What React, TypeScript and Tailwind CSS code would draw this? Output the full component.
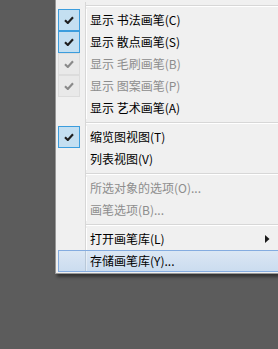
import React from "react";

type Item =
  | { kind: "sep" }
  | {
      kind: "item";
      label: string;
      checked?: boolean;
      disabled?: boolean;
      submenu?: boolean;
      active?: boolean;
    };

const items: Item[] = [
  { kind: "sep" },
  { kind: "item", label: "显示 书法画笔(C)", checked: true },
  { kind: "item", label: "显示 散点画笔(S)", checked: true },
  { kind: "item", label: "显示 毛刷画笔(B)", checked: true, disabled: true },
  { kind: "item", label: "显示 图案画笔(P)", checked: true, disabled: true },
  { kind: "item", label: "显示 艺术画笔(A)" },
  { kind: "sep" },
  { kind: "item", label: "缩览图视图(T)", checked: true },
  { kind: "item", label: "列表视图(V)" },
  { kind: "sep" },
  { kind: "item", label: "所选对象的选项(O)...", disabled: true },
  { kind: "item", label: "画笔选项(B)...", disabled: true },
  { kind: "sep" },
  { kind: "item", label: "打开画笔库(L)", submenu: true },
  { kind: "item", label: "存储画笔库(Y)...", active: true },
];

function Check({ disabled }: { disabled?: boolean }) {
  return (
    <div
      className={
        "flex h-[22px] w-[22px] items-center justify-center border " +
        (disabled ? "border-[#dcdcdc] bg-[#e9e9e9]" : "border-[#3c9ddd] bg-[#c4dff1]")
      }
    >
      <svg width="10" height="8" viewBox="0 0 10 8">
        <path
          d="M1 4.2 L3.8 7 L9 1.2"
          fill="none"
          stroke={disabled ? "#8a8a8a" : "#1e1e1e"}
          strokeWidth="2.1"
        />
      </svg>
    </div>
  );
}

function Row({ item }: { item: Extract<Item, { kind: "item" }> }) {
  const gutterLine = item.active ? "bg-[#b9c8d8]" : "bg-[#d7d7d7]";
  return (
    <div
      className={
        "flex h-[22px] items-center " +
        (item.active
          ? "ml-[2px] border border-r-0 border-[#84ace0] bg-gradient-to-b from-[#dbe7f4] to-[#cbdcef]"
          : "ml-[2px]")
      }
    >
      <div className={"flex w-[27px] items-center " + (item.active ? "-ml-px" : "")}>
        {item.checked ? <Check disabled={item.disabled} /> : <div className="w-[22px]" />}
      </div>
      <div className={"h-full w-px " + gutterLine} />
      <div className={"h-full w-px " + (item.active ? "bg-white/40" : "bg-white")} />
      <span
        className={
          "flex-1 pl-[3px] text-[12px] leading-none whitespace-nowrap " +
          (item.disabled ? "text-[#8d8d8d]" : "text-black")
        }
      >
        {item.label}
      </span>
      {item.submenu && (
        <svg width="5" height="8" viewBox="0 0 5 8" className="mr-[8px]">
          <path d="M0 0 L4.5 4 L0 8 Z" fill="#1a1a1a" />
        </svg>
      )}
    </div>
  );
}

function Separator() {
  return (
    <div className="ml-[2px] flex h-[7px]">
      <div className="w-[27px]" />
      <div className="h-full w-px bg-[#d7d7d7]" />
      <div className="flex flex-1 flex-col pt-[3px]">
        <div className="h-px bg-[#d7d7d7]" />
        <div className="h-px bg-white" />
      </div>
    </div>
  );
}

export default function App() {
  return (
    <div
      className="flex h-[349px] w-[278px] items-start overflow-hidden bg-[#5c5c5c]"
      style={{ fontFamily: "'Noto Sans CJK SC', 'Noto Sans', sans-serif" }}
    >
      <div className="ml-[55px] flex-1 border-b border-l border-[#979797] bg-[#f0f0f0] pt-[2px] pb-px shadow-[2px_3px_3px_rgba(0,0,0,0.45)]">
        {items.map((it, i) =>
          it.kind === "sep" ? <Separator key={i} /> : <Row key={i} item={it} />
        )}
      </div>
    </div>
  );
}
